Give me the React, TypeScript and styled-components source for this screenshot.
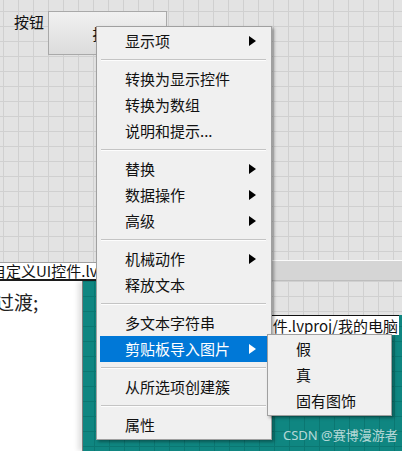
import styled, { createGlobalStyle } from "styled-components";

const GlobalStyle = createGlobalStyle`
  html, body {
    margin: 0;
    padding: 0;
    background: #e3e3e3;
  }
  * {
    box-sizing: border-box;
  }
`;

const FONT = `"Noto Sans CJK SC", "Noto Sans", sans-serif`;

// LabVIEW front panel grid
const Desk = styled.div`
  position: relative;
  width: 402px;
  height: 451px;
  overflow: hidden;
  font-family: ${FONT};
  color: #111;
  background-color: #e3e3e3;
  background-image: linear-gradient(to right, #d0d0d0 1px, transparent 1px),
    linear-gradient(to bottom, #d0d0d0 1px, transparent 1px);
  background-size: 15px 15px;
  background-position: 3px 11px;
`;

// Controls on the panel
const ControlLabel = styled.span`
  position: absolute;
  left: 14px;
  top: 12px;
  font-size: 15px;
  line-height: 20px;
  color: #111;
`;

const PanelButton = styled.div`
  position: absolute;
  left: 48px;
  top: 11px;
  width: 119px;
  height: 44px;
  display: flex;
  align-items: center;
  justify-content: center;
  font-size: 15px;
  border: 1px solid #a9a9a9;
  background: linear-gradient(to bottom, #f1f1f1, #dcdcdc);
`;

// Windows behind the menu
const DocWindow = styled.div`
  position: absolute;
  left: -9px;
  top: 262px;
  width: 112px;
  bottom: 0;
  display: flex;
  flex-direction: column;
  background: #fff;
`;

const DocTitle = styled.div`
  height: 19px;
  font-size: 15px;
  line-height: 16px;
  white-space: nowrap;
  overflow: hidden;
  border-top: 1px solid #a0a0a0;
  border-bottom: 2px solid #1c1c1c;
  background: #fff;
`;

const DocBody = styled.div`
  flex: 1;
  padding: 9px 0 0 4px;
  font-size: 19px;
  line-height: 24px;
  color: #222;
`;

const TealPane = styled.div`
  position: absolute;
  left: 82px;
  top: 281px;
  right: 0;
  bottom: 0;
  border-left: 1px solid #7d7d7d;
  box-shadow: -4px 0 5px rgba(0, 0, 0, 0.12);
  background-color: #0f8681;
  background-image: linear-gradient(to right, #0b7772 1px, transparent 1px),
    linear-gradient(to bottom, #0b7772 1px, transparent 1px);
  background-size: 15px 15px;
  background-position: 11px 0px;
`;

const PanelWindow = styled.div`
  position: absolute;
  left: 255px;
  top: 260px;
  right: 0;
  display: flex;
  flex-direction: column;
`;

const InactiveTitle = styled.div`
  height: 21px;
  background: #d5d5d5;
  border-top: 1px solid #fafafa;
  border-bottom: 1px solid #bdbdbd;
`;

const PanelGrid = styled.div`
  height: 34px;
  background-color: #e3e3e3;
  background-image: linear-gradient(to right, #d0d0d0 1px, transparent 1px),
    linear-gradient(to bottom, #d0d0d0 1px, transparent 1px);
  background-size: 15px 15px;
  background-position: 3px 0px;
`;

const StatusPath = styled.div`
  height: 20px;
  margin-right: 3px;
  display: flex;
  justify-content: flex-end;
  align-items: center;
  font-size: 15px;
  white-space: nowrap;
  overflow: hidden;
  background: #fff;
  border-top: 1px solid #111;
  padding-right: 1px;
`;

const Watermark = styled.span`
  position: absolute;
  left: 283px;
  top: 426px;
  font-family: "Noto Sans", ${FONT};
  font-size: 13px;
  line-height: 18px;
  color: rgba(225, 240, 240, 0.8);
`;

// Context menu
const Menu = styled.div<{ $left: number; $top: number; $width: number }>`
  position: absolute;
  left: ${(p) => p.$left}px;
  top: ${(p) => p.$top}px;
  width: ${(p) => p.$width}px;
  padding: 1px 3px;
  display: flex;
  flex-direction: column;
  background: #f0f0f0;
  border: 1px solid #a0a0a0;
  box-shadow: 2px 2px 3px rgba(0, 0, 0, 0.35);
`;

const Item = styled.div<{ $active?: boolean }>`
  height: 26px;
  display: flex;
  align-items: center;
  justify-content: space-between;
  padding: 0 12px 0 25px;
  font-size: 15px;
  line-height: 20px;
  white-space: nowrap;
  color: ${(p) => (p.$active ? "#fff" : "#111")};
  background: ${(p) => (p.$active ? "#0078d7" : "transparent")};
`;

const Arrow = styled.span<{ $active?: boolean }>`
  width: 0;
  height: 0;
  border-top: 5px solid transparent;
  border-bottom: 5px solid transparent;
  border-left: 7px solid ${(p) => (p.$active ? "#fff" : "#000")};
`;

const Separator = styled.div`
  height: 12px;
  display: flex;
  align-items: center;
  padding: 0 2px 0 1px;

  &::after {
    content: "";
    flex: 1;
    border-top: 1px solid #c4c4c4;
    border-bottom: 1px solid #fdfdfd;
  }
`;

type Entry = { label: string; sub?: boolean; active?: boolean } | "sep";

const entries: Entry[] = [
  { label: "显示项", sub: true },
  "sep",
  { label: "转换为显示控件" },
  { label: "转换为数组" },
  { label: "说明和提示..." },
  "sep",
  { label: "替换", sub: true },
  { label: "数据操作", sub: true },
  { label: "高级", sub: true },
  "sep",
  { label: "机械动作", sub: true },
  { label: "释放文本" },
  "sep",
  { label: "多文本字符串" },
  { label: "剪贴板导入图片", sub: true, active: true },
  "sep",
  { label: "从所选项创建簇" },
  "sep",
  { label: "属性" },
];

const subEntries = ["假", "真", "固有图饰"];

export default function App() {
  return (
    <>
      <GlobalStyle />
      <Desk>
        <ControlLabel>按钮</ControlLabel>
        <PanelButton>按钮</PanelButton>

        <DocWindow>
          <DocTitle>自定义UI控件.lvproj</DocTitle>
          <DocBody>过渡;</DocBody>
        </DocWindow>

        <TealPane />

        <PanelWindow>
          <InactiveTitle />
          <PanelGrid />
          <StatusPath>件.lvproj/我的电脑</StatusPath>
        </PanelWindow>

        <Watermark>CSDN @赛博漫游者</Watermark>

        <Menu $left={96} $top={26} $width={176}>
          {entries.map((e, i) =>
            e === "sep" ? (
              <Separator key={i} />
            ) : (
              <Item key={i} $active={e.active}>
                <span>{e.label}</span>
                {e.sub && <Arrow $active={e.active} />}
              </Item>
            )
          )}
        </Menu>

        <Menu $left={267} $top={334} $width={125}>
          {subEntries.map((s) => (
            <Item key={s}>
              <span>{s}</span>
            </Item>
          ))}
        </Menu>
      </Desk>
    </>
  );
}
